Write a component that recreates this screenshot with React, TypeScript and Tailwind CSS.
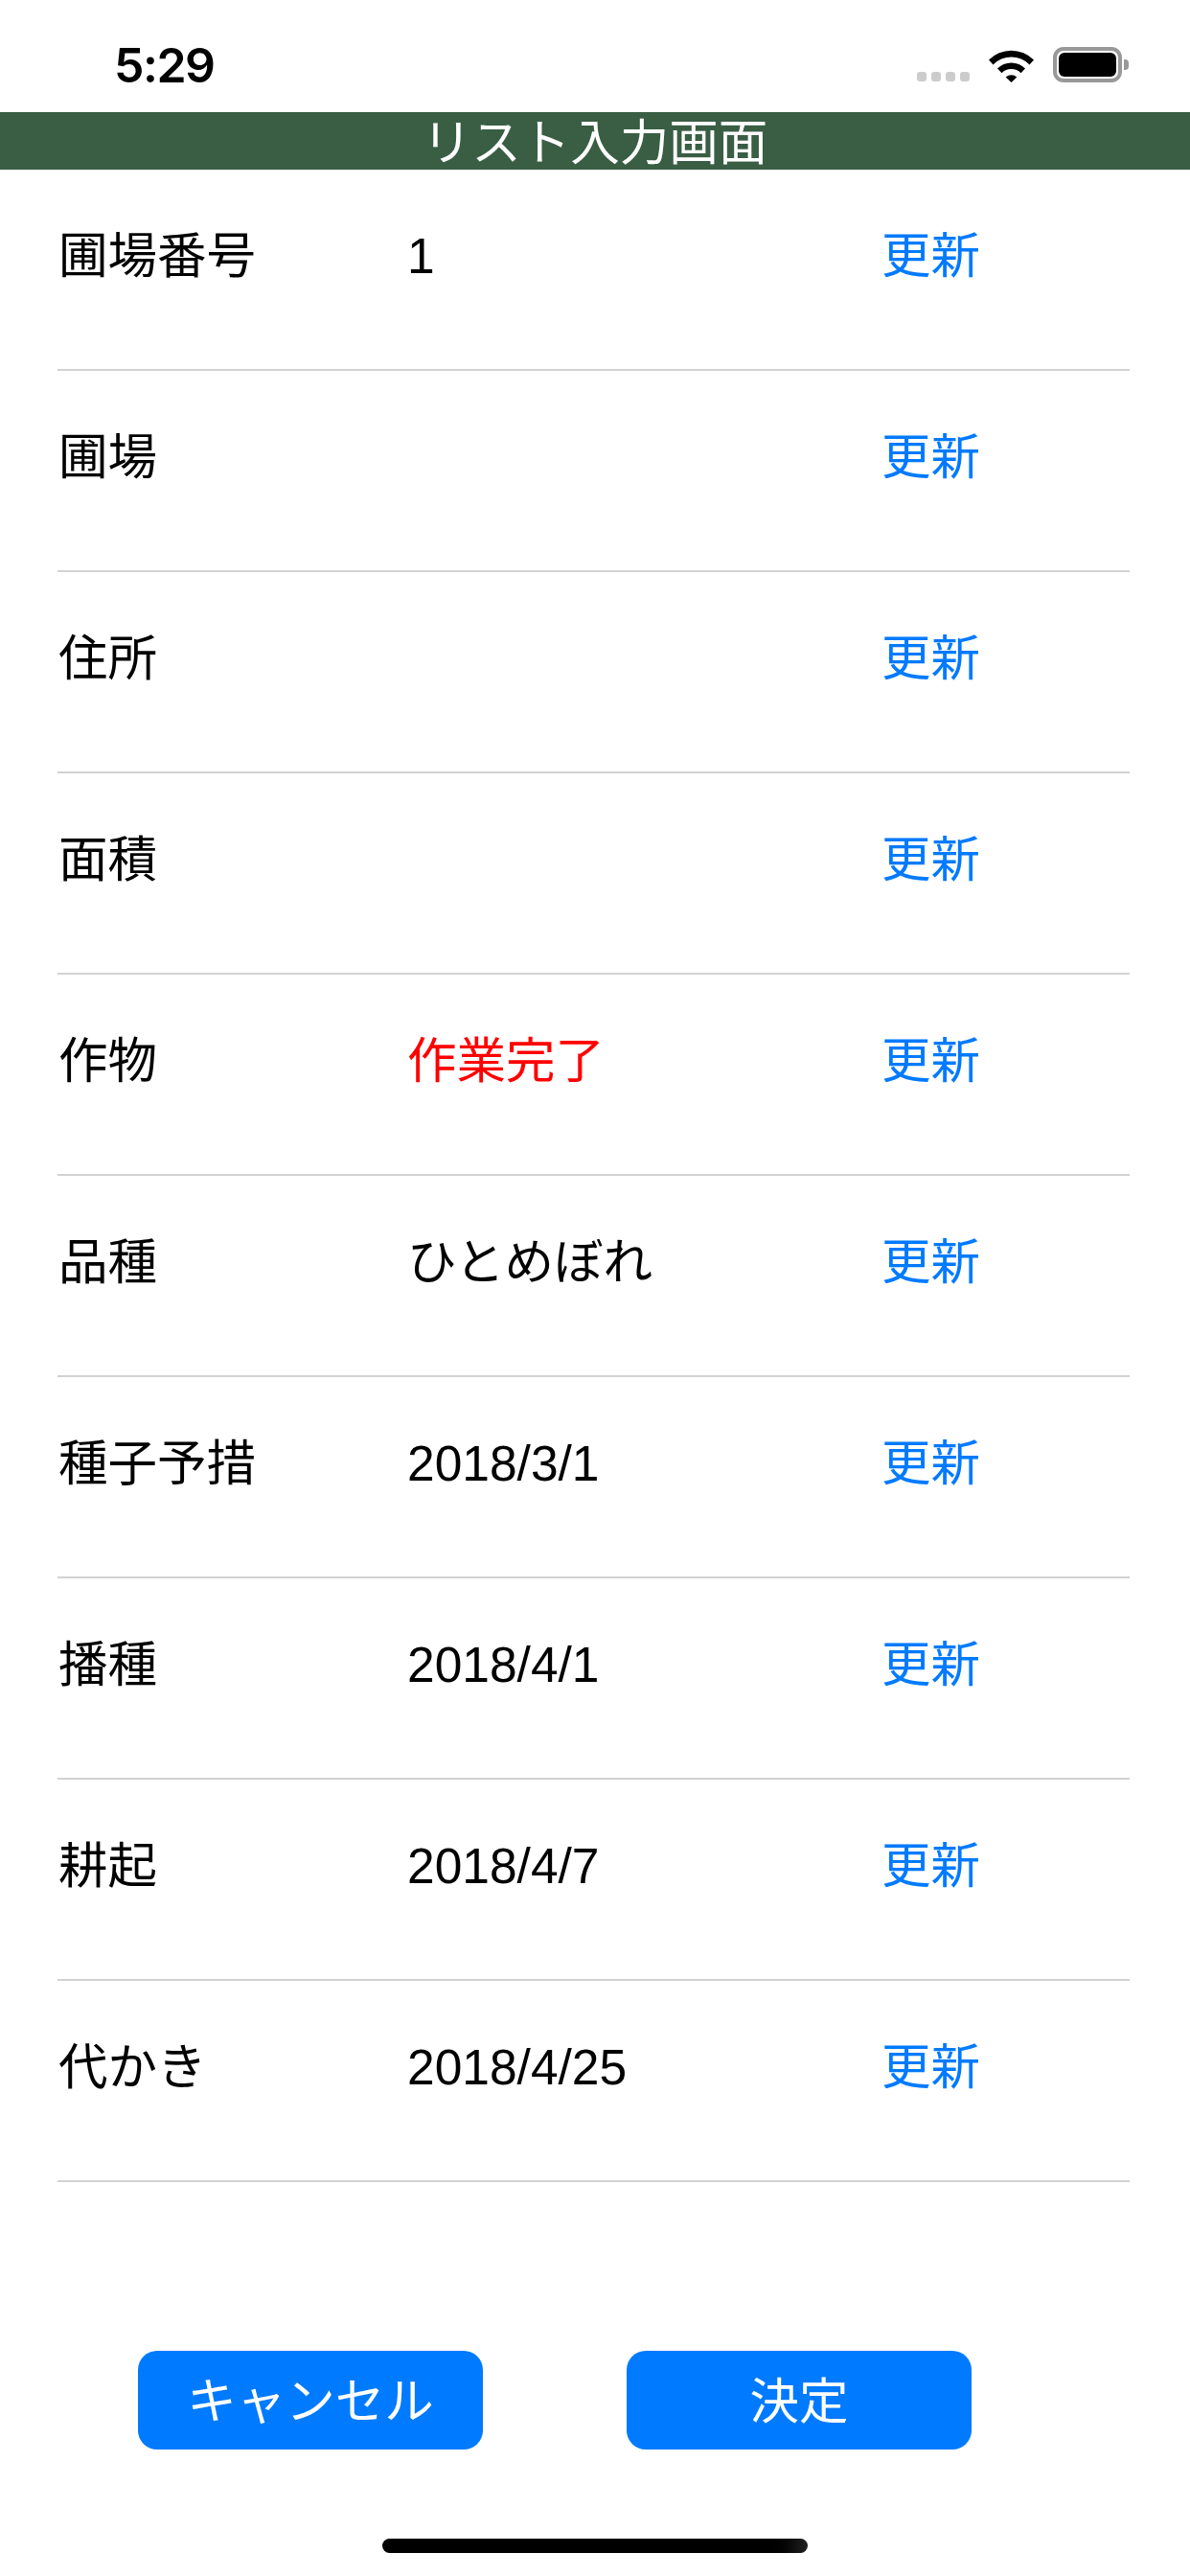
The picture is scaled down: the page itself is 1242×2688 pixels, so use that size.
const FONT = "font-['Liberation_Sans','Noto_Sans_CJK_JP',sans-serif]";

const rows: { label: string; value: string; red?: boolean }[] = [
  { label: "圃場番号", value: "1" },
  { label: "圃場", value: "" },
  { label: "住所", value: "" },
  { label: "面積", value: "" },
  { label: "作物", value: "作業完了", red: true },
  { label: "品種", value: "ひとめぼれ" },
  { label: "種子予措", value: "2018/3/1" },
  { label: "播種", value: "2018/4/1" },
  { label: "耕起", value: "2018/4/7" },
  { label: "代かき", value: "2018/4/25" },
];

function Wifi() {
  return (
    <svg width="47" height="36" viewBox="0 0 47 36" className="block">
      <path d="M0 12.5 A33 33 0 0 1 47 12.5 L42.5 17.5 A26.5 26.5 0 0 0 4.5 17.5 Z" fill="#000" />
      <path d="M9 21.5 A20.5 20.5 0 0 1 38 21.5 L33.5 26.3 A14 14 0 0 0 13.5 26.3 Z" fill="#000" />
      <path d="M17.7 30.5 A8.5 8.5 0 0 1 29.3 30.5 L23.5 36 Z" fill="#000" />
    </svg>
  );
}

export default function App() {
  return (
    <div className={`${FONT} w-[1242px] h-[2688px] bg-white flex flex-col text-[51.5px] leading-[60px] text-black`}>
      <div className="h-[117px] flex items-start justify-between pl-[119px] pr-[64px] pt-[38px]">
        <span className="font-['Inter',sans-serif] text-[50px] leading-[60px] font-semibold tracking-[-1.5px]">5:29</span>
        <div className="flex items-end gap-[20px] pt-[11px]">
          <div className="flex gap-[5px] pb-[1px]">
            <span className="w-[10px] h-[10px] rounded-[3px] bg-[#cccccc]" />
            <span className="w-[10px] h-[10px] rounded-[3px] bg-[#cccccc]" />
            <span className="w-[10px] h-[10px] rounded-[3px] bg-[#cccccc]" />
            <span className="w-[10px] h-[10px] rounded-[3px] bg-[#cccccc]" />
          </div>
          <Wifi />
          <div className="flex items-center">
            <div className="w-[72px] h-[37px] rounded-[11px] border-[4px] border-[#999999] p-[2px]">
              <div className="w-full h-full rounded-[6px] bg-black" />
            </div>
            <div className="w-[5px] h-[11px] ml-[2px] rounded-r-[4px] bg-[#999999]" />
          </div>
        </div>
      </div>
      <div className="h-[60px] bg-[#395e44] text-white flex justify-center leading-[64px] overflow-hidden">
        リスト入力画面
      </div>
      <div className="ml-[60px] w-[1119px]">
        {rows.map((r) => (
          <div key={r.label} className="h-[210px] border-b-[2px] border-[#d2d2d4] flex items-start pt-[60px]">
            <div className="w-[365px] pl-[1px]">{r.label}</div>
            <div className={`w-[495px] ${r.red ? "text-[#ff0000]" : ""}`}>{r.value}</div>
            <div className="text-[#007aff]">更新</div>
          </div>
        ))}
      </div>
      <div className="mt-[176px] pl-[144px] flex gap-[150px]">
        <button className="w-[360px] h-[103px] pt-[3px] rounded-[20px] bg-[#007aff] text-white">キャンセル</button>
        <button className="w-[360px] h-[103px] pt-[3px] rounded-[20px] bg-[#007aff] text-white">決定</button>
      </div>
      <div className="mt-[93px] ml-[399px] w-[444px] h-[15px] rounded-full bg-linear-to-r from-black from-90% to-[#222222]" />
    </div>
  );
}
